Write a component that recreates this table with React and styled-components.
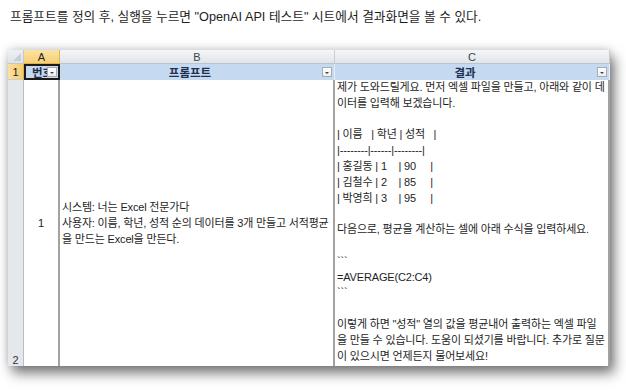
import React from 'react';
import styled, { createGlobalStyle, css } from 'styled-components';

const GlobalStyle = createGlobalStyle`
  html, body {
    margin: 0;
    padding: 0;
    background: #fff;
  }
  body {
    font-family: "Liberation Sans", "Noto Sans CJK KR", sans-serif;
    color: #222;
  }
`;

const Page = styled.div`
  width: 626px;
  height: 390px;
  overflow: hidden;
`;

const Caption = styled.p`
  margin: 0;
  padding: 9px 0 0 10px;
  height: 50px;
  box-sizing: border-box;
  font-size: 12.7px;
  line-height: 16px;
  color: #1e1e1e;
`;

const Sheet = styled.div`
  margin-left: 8px;
  width: 602px;
  height: 316px;
  overflow: hidden;
  box-shadow: 4px 7px 12px rgba(0, 0, 0, 0.55), 0 -2px 8px rgba(0, 0, 0, 0.12);
  display: grid;
  grid-template-columns: 16px 36px 275px 275px;
  grid-template-rows: 14px 16px 288px;
  background: #fff;
`;

const Corner = styled.div`
  background: linear-gradient(#eef0f3, #dfe3e8);
  border-right: 1px solid #c3c8cf;
  border-bottom: 1px solid #c3c8cf;
  position: relative;
  &::after {
    content: '';
    position: absolute;
    right: 2px;
    bottom: 2px;
    border-left: 8px solid transparent;
    border-bottom: 8px solid #c9ced5;
  }
`;

const ColHead = styled.div`
  display: flex;
  align-items: center;
  justify-content: center;
  font-size: 11px;
  color: #3c4350;
  background: linear-gradient(#f4f6f8, #e1e5ea);
  border-right: 1px solid #c8cdd4;
  border-bottom: 1px solid #bcc3cc;
  ${(p) =>
    p.$active &&
    css`
      background: linear-gradient(#fbe3a6, #f6cf73);
      border-right-color: #e2b458;
      border-bottom-color: #e0ae4a;
      color: #222;
    `}
`;

const RowHead = styled.div`
  display: flex;
  justify-content: center;
  align-items: ${(p) => (p.$bottom ? 'flex-end' : 'center')};
  padding-bottom: ${(p) => (p.$bottom ? '1px' : '0')};
  font-size: 11px;
  color: #333;
  background: #e4e7eb;
  border-right: 1px solid #b9bec6;
  border-bottom: 1px solid #c8cdd4;
  ${(p) =>
    p.$active &&
    css`
      background: linear-gradient(90deg, #fbe0a0, #f5cc6e);
      border-right-color: #e0ae4a;
      color: #222;
    `}
`;

const HeaderCell = styled.div`
  position: relative;
  display: flex;
  align-items: center;
  justify-content: ${(p) => (p.$left ? 'flex-start' : 'center')};
  padding: ${(p) => (p.$left ? '0 0 0 8px' : '0 14px 0 0')};
  background: #c5d9f1;
  border-right: 1px solid #e8eef6;
  font-size: 11.5px;
  font-weight: bold;
  color: #1f2f4f;
  white-space: nowrap;
  overflow: hidden;
  ${(p) =>
    p.$selected &&
    css`
      outline: 2px solid #1a1a1a;
      outline-offset: -2px;
    `}
`;

const FilterButton = styled.span`
  position: absolute;
  right: 2px;
  top: 3px;
  width: 10px;
  height: 10px;
  box-sizing: border-box;
  background: linear-gradient(#ffffff, #e9ecef);
  border: 1px solid #a8adb4;
  z-index: 1;
  &::after {
    content: '';
    position: absolute;
    left: 2px;
    top: 4px;
    border-left: 2px solid transparent;
    border-right: 2px solid transparent;
    border-top: 2px solid #444;
  }
`;

const DataCell = styled.div`
  background: #fff;
  border-right: 2px solid #a2a2a2;
  font-size: 11px;
  letter-spacing: -0.17px;
  line-height: 15.8px;
  color: #1e1e1e;
  white-space: pre;
  overflow: hidden;
  display: flex;
  flex-direction: column;
  justify-content: ${(p) => (p.$top ? 'flex-start' : 'center')};
  align-items: ${(p) => (p.$center ? 'center' : 'flex-start')};
  padding-left: ${(p) => (p.$center ? '0' : '2px')};
`;

const promptText = `시스템: 너는 Excel 전문가다
사용자: 이름, 학년, 성적 순의 데이터를 3개 만들고 서적평균
을 만드는 Excel을 만든다.`;

const resultText = `제가 도와드릴게요. 먼저 엑셀 파일을 만들고, 아래와 같이 데
이터를 입력해 보겠습니다.

| 이름   | 학년 | 성적   |
|--------|------|--------|
| 홍길동 | 1    | 90     |
| 김철수 | 2    | 85     |
| 박영희 | 3    | 95     |

다음으로, 평균을 계산하는 셀에 아래 수식을 입력하세요.

\`\`\`
=AVERAGE(C2:C4)
\`\`\`

이렇게 하면 "성적" 열의 값을 평균내어 출력하는 엑셀 파일
을 만들 수 있습니다. 도움이 되셨기를 바랍니다. 추가로 질문
이 있으시면 언제든지 물어보세요!`;

const App = () => {
  return (
    <Page>
      <GlobalStyle />
      <Caption>
        프롬프트를 정의 후, 실행을 누르면 "OpenAI API 테스트" 시트에서 결과화면을 볼 수 있다.
      </Caption>
      <Sheet>
        <Corner />
        <ColHead $active>A</ColHead>
        <ColHead>B</ColHead>
        <ColHead>C</ColHead>

        <RowHead $active>1</RowHead>
        <HeaderCell $left $selected>
          번호
          <FilterButton />
        </HeaderCell>
        <HeaderCell>
          프롬프트
          <FilterButton />
        </HeaderCell>
        <HeaderCell>
          결과
          <FilterButton />
        </HeaderCell>

        <RowHead $bottom>2</RowHead>
        <DataCell $center>1</DataCell>
        <DataCell>{promptText}</DataCell>
        <DataCell $top>{resultText}</DataCell>
      </Sheet>
    </Page>
  );
};

export default App;
